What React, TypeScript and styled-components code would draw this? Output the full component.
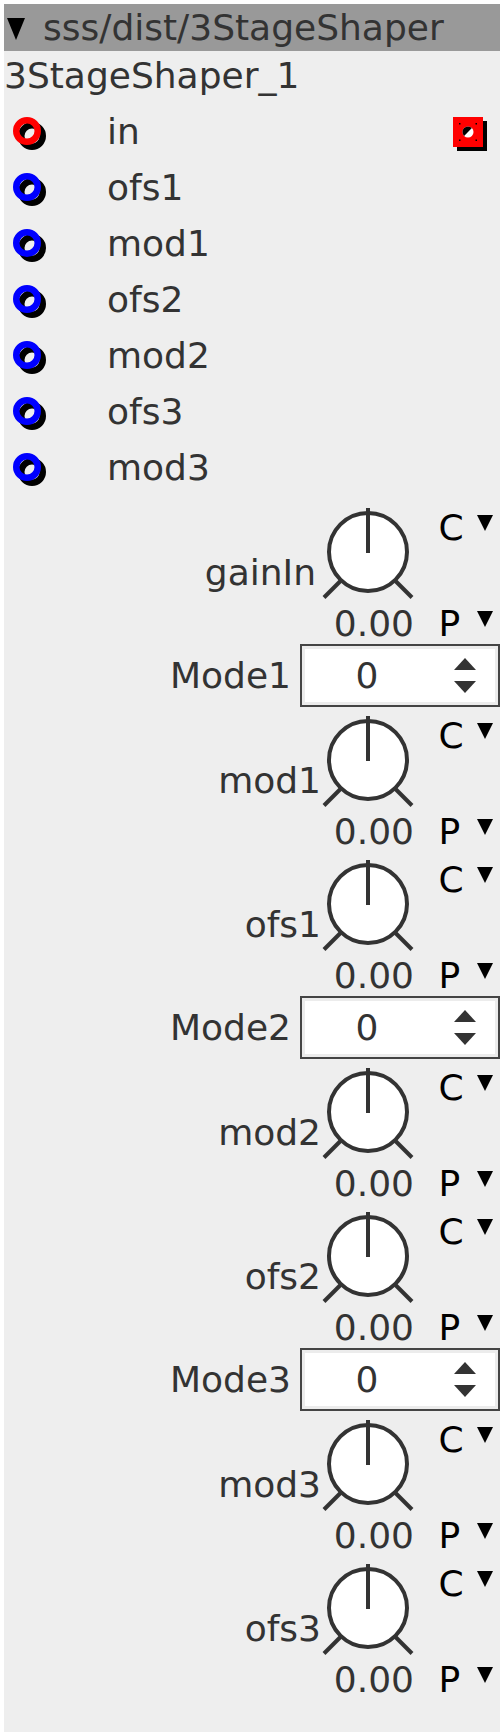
import React from 'react';
import styled, { createGlobalStyle } from 'styled-components';

const Global = createGlobalStyle`
  html, body { padding: 0; background: #fff; }
  body { margin: 4px; font-family: "DejaVu Sans", "Liberation Sans", sans-serif; }
`;

const Panel = styled.div`
  background: #eee;
  width: 496px;
  min-height: 1728px;
  color: #333;
  font-size: 36px;
  box-sizing: border-box;
`;

const Header = styled.div`
  height: 47px;
  background: #999;
  display: flex;
  align-items: center;
  padding-left: 3px;
  gap: 18px;
`;

const HeaderArrow = styled.span`
  flex: none;
  width: 0;
  height: 0;
  margin-top: 2px;
  border-left: 9px solid transparent;
  border-right: 9px solid transparent;
  border-top: 22px solid #000;
`;

const HeaderText = styled.span`
  line-height: 47px;
  color: #333;
  white-space: nowrap;
`;

const Title = styled.div`
  height: 52px;
  box-sizing: border-box;
  padding-bottom: 3px;
  line-height: 49px;
  white-space: nowrap;
`;

const PortList = styled.div`
  display: flex;
  flex-direction: column;
`;

const PortRow = styled.div`
  height: 56px;
  display: flex;
  align-items: center;
  padding: 0 13px 0 9px;
`;

const InPortSvg = styled.svg`
  flex: none;
  margin-top: 5px;
`;

const PortLabel = styled.span`
  margin-left: 61px;
  line-height: 41px;
`;

const OutPort = styled.svg`
  flex: none;
  margin-left: auto;
  margin-top: 6px;
`;

const Controls = styled.div`
  display: flex;
  flex-direction: column;
  padding-top: 5px;
`;

const KnobGroup = styled.div`
  display: grid;
  grid-template-columns: 1fr 92px 86px;
  grid-template-rows: 103px 41px;
  height: 144px;
`;

const KnobLabel = styled.div<{ $trail?: number }>`
  grid-column: 1;
  grid-row: 1;
  text-align: right;
  padding-right: ${(p) => 1 + (p.$trail ?? 0)}px;
  margin-top: 51.5px;
  line-height: 41px;
  white-space: nowrap;
`;

const KnobSvg = styled.svg`
  grid-column: 2;
  grid-row: 1;
  margin-top: 6px;
  overflow: visible;
`;

const KnobValue = styled.div`
  grid-column: 2;
  grid-row: 2;
  text-align: right;
  line-height: 41px;
  white-space: nowrap;
`;

const Side = styled.div`
  grid-column: 3;
  grid-row: 1 / span 2;
  display: flex;
  flex-direction: column;
  justify-content: space-between;
  padding: 7px 7px 0 24.5px;
`;

const SelectRow = styled.div`
  display: flex;
  justify-content: space-between;
  align-items: flex-start;
  line-height: 41px;
  color: #000;
`;

const DownArrow = styled.span`
  width: 0;
  height: 0;
  margin-top: 8px;
  border-left: 8.5px solid transparent;
  border-right: 8.5px solid transparent;
  border-top: 16px solid #000;
`;

const ModeRow = styled.div`
  display: grid;
  grid-template-columns: 1fr 200px;
  align-items: center;
  height: 64px;
`;

const ModeLabel = styled.div`
  text-align: right;
  padding-right: 9px;
  line-height: 41px;
  margin-top: -1px;
`;

const SpinBox = styled.div`
  height: 63px;
  box-sizing: border-box;
  border: 2px solid #444;
  box-shadow: inset 0 0 0 3px #ececec;
  background: #fff;
  display: flex;
  align-items: center;
  align-self: start;
`;

const SpinValue = styled.div`
  flex: 1;
  text-align: center;
  line-height: 41px;
  color: #333;
`;

const SpinButtons = styled.div`
  width: 66px;
  display: flex;
  flex-direction: column;
  align-items: center;
  gap: 11px;
`;

const SpinUp = styled.span`
  width: 0;
  height: 0;
  border-left: 11.5px solid transparent;
  border-right: 11.5px solid transparent;
  border-bottom: 12px solid #333;
`;

const SpinDown = styled.span`
  width: 0;
  height: 0;
  border-left: 11.5px solid transparent;
  border-right: 11.5px solid transparent;
  border-top: 12px solid #333;
`;

const InPort: React.FC<{ color: string }> = ({ color }) => (
  <InPortSvg width="33" height="33" viewBox="0 0 33 33">
    <circle cx="19" cy="19" r="10.75" fill="none" stroke="#000" strokeWidth="6.5" />
    <circle cx="14" cy="14" r="10.75" fill="none" stroke={color} strokeWidth="6.5" />
  </InPortSvg>
);

const OutPortIcon: React.FC = () => (
  <OutPort width="34" height="34" viewBox="0 0 34 34">
    <rect x="4" y="4" width="30" height="30" fill="#000" />
    <rect x="0" y="0" width="30" height="30" fill="#f00" />
    <circle cx="15" cy="15" r="5.5" fill="#fff" />
    <path d="M 11.1 18.9 A 5.5 5.5 0 0 1 18.9 11.1 Z" fill="#000" />
    <rect x="6" y="6" width="1.5" height="1.5" fill="#000" />
    <rect x="22.5" y="6" width="1.5" height="1.5" fill="#000" />
    <rect x="6" y="22.5" width="1.5" height="1.5" fill="#000" />
    <rect x="22.5" y="22.5" width="1.5" height="1.5" fill="#000" />
  </OutPort>
);

const Knob: React.FC<{ label: string; trail?: number }> = ({ label, trail }) => (
  <KnobGroup>
    <KnobLabel $trail={trail}>{label}</KnobLabel>
    <KnobSvg width="92" height="92" viewBox="0 0 92 92">
      <circle cx="46" cy="46" r="39" fill="#fff" stroke="#333" strokeWidth="4" />
      <line x1="46" y1="2" x2="46" y2="47" stroke="#333" strokeWidth="4" />
      <line x1="18.5" y1="75" x2="2" y2="91.5" stroke="#333" strokeWidth="4" />
      <line x1="73.5" y1="75" x2="90" y2="91.5" stroke="#333" strokeWidth="4" />
    </KnobSvg>
    <KnobValue>0.00</KnobValue>
    <Side>
      <SelectRow>
        <span>C</span>
        <DownArrow />
      </SelectRow>
      <SelectRow>
        <span>P</span>
        <DownArrow />
      </SelectRow>
    </Side>
  </KnobGroup>
);

const Mode: React.FC<{ label: string }> = ({ label }) => (
  <ModeRow>
    <ModeLabel>{label}</ModeLabel>
    <SpinBox>
      <SpinValue>0</SpinValue>
      <SpinButtons>
        <SpinUp />
        <SpinDown />
      </SpinButtons>
    </SpinBox>
  </ModeRow>
);

const ports = [
  { name: 'in', color: '#f00', out: true },
  { name: 'ofs1', color: '#00f' },
  { name: 'mod1', color: '#00f' },
  { name: 'ofs2', color: '#00f' },
  { name: 'mod2', color: '#00f' },
  { name: 'ofs3', color: '#00f' },
  { name: 'mod3', color: '#00f' },
];

type Ctrl = { kind: 'knob' | 'mode'; label: string; trail?: number };
const controls: Ctrl[] = [
  { kind: 'knob', label: 'gainIn', trail: 5 },
  { kind: 'mode', label: 'Mode1' },
  { kind: 'knob', label: 'mod1' },
  { kind: 'knob', label: 'ofs1' },
  { kind: 'mode', label: 'Mode2' },
  { kind: 'knob', label: 'mod2' },
  { kind: 'knob', label: 'ofs2' },
  { kind: 'mode', label: 'Mode3' },
  { kind: 'knob', label: 'mod3' },
  { kind: 'knob', label: 'ofs3' },
];

export default function App() {
  return (
    <>
      <Global />
      <Panel>
        <Header>
          <HeaderArrow />
          <HeaderText>sss/dist/3StageShaper</HeaderText>
        </Header>
        <Title>3StageShaper_1</Title>
        <PortList>
          {ports.map((p) => (
            <PortRow key={p.name}>
              <InPort color={p.color} />
              <PortLabel>{p.name}</PortLabel>
              {p.out && <OutPortIcon />}
            </PortRow>
          ))}
        </PortList>
        <Controls>
          {controls.map((c) =>
            c.kind === 'knob' ? (
              <Knob key={c.label} label={c.label} trail={c.trail} />
            ) : (
              <Mode key={c.label} label={c.label} />
            )
          )}
        </Controls>
      </Panel>
    </>
  );
}
